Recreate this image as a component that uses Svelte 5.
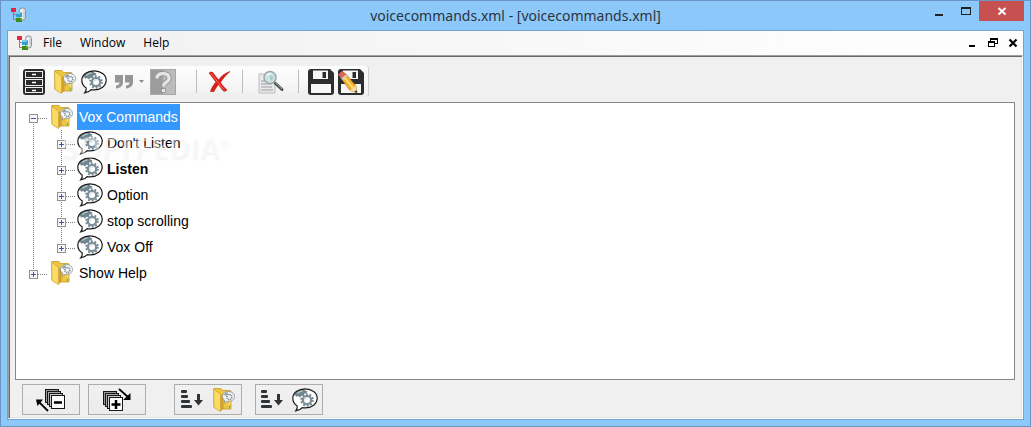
<script>
  let nodes = $state([
    {
      label: 'Vox Commands',
      open: true,
      children: [
        { label: "Don't Listen" },
        { label: 'Listen', bold: true },
        { label: 'Option' },
        { label: 'stop scrolling' },
        { label: 'Vox Off' }
      ]
    },
    { label: 'Show Help', open: false, children: [] }
  ]);
  let selected = $state('Vox Commands');

  function setAll(open) {
    for (const node of nodes) node.open = open && node.children.length > 0;
  }
</script>

{#snippet appIcon()}
  <svg width="16" height="16" viewBox="0 0 16 16" aria-hidden="true">
    <path d="M2.500 5v7.500h4M2.500 7.500h4" fill="none" stroke="#c8637a" />
    <rect x="8.500" y="1" width="6" height="12" rx="2.700" fill="#e4e7e8" stroke="#8b9396" />
    <path d="M10.500 3v8" stroke="#fff" stroke-width="1.500" />
    <path d="M13 4v7" stroke="#b9bfc1" />
    <rect x="0" y="1" width="5" height="4" fill="#e5243f" />
    <rect x="5" y="5" width="6" height="5" fill="#2f9fd4" />
    <path d="M5 5h6l-2 2H5z" fill="#7accec" />
    <rect x="5" y="11" width="6" height="4" fill="#3b8a1d" />
    <path d="M8 9.500l3.500 2.500-1.500 2z" fill="#5fb52f" />
  </svg>
{/snippet}

{#snippet bubble()}
  <svg width="26" height="24" viewBox="0 0 26 24" aria-hidden="true">
    <path
      d="M13 .8C6.200.8.800 4.900.800 10.300c0 3.300 1.700 6 4.400 7.700.3 1.900-.3 3.500-1.500 4.900 2.700-.3 5-1.300 6.500-3.200 1 .2 1.800.2 2.800.2 6.800 0 12.200-4.100 12.200-9.600S19.800.8 13 .8z"
      fill="#fff"
    />
    <path d="M2.500 5.500C5 2.500 8.500 1.200 12.500 1l.8 1.800 2 .5-.8 2-2 .3-.7 2-2.300.2-1.500 1.700-1.800-1.500-2.200.7-.5-1.500-1.500.3z" fill="#71858f" />
    <path d="M5.500 5.500c1.500-2 3.500-2.600 5-2.500" fill="none" stroke="#b5c3ca" stroke-width="1.400" />
    <circle cx="15" cy="12" r="5.900" fill="none" stroke="#778a94" stroke-width="1.800" stroke-dasharray="1.900 1.800" />
    <circle cx="15" cy="12" r="4.200" fill="#fff" stroke="#7d909a" stroke-width="2.300" />
    <path d="M12.800 12.500a2.300 2.300 0 0 1 3-2.500" fill="none" stroke="#c3ced3" stroke-width="1" />
    <path
      d="M13 .8C6.200.8.800 4.900.800 10.300c0 3.300 1.700 6 4.400 7.700.3 1.900-.3 3.500-1.500 4.900 2.700-.3 5-1.300 6.500-3.200 1 .2 1.800.2 2.800.2 6.800 0 12.200-4.100 12.200-9.600S19.800.8 13 .8z"
      fill="none"
      stroke="#1c1c1c"
      stroke-width="1.200"
    />
  </svg>
{/snippet}

{#snippet folder()}
  <svg width="24" height="26" viewBox="0 0 24 26" aria-hidden="true">
    <path d="M2 1.500h7l1.500 2H18a1 1 0 0 1 1 1V22H8L2 20z" fill="#edc542" stroke="#c79a2b" stroke-width=".8" />
    <path d="M17.500 5v16.500" stroke="#f7df83" stroke-width="1.500" />
    <path d="M1.500 2 7 6c1 .8 1.500 1.500 1.500 3v15.500L2 20.500z" fill="#f8dc64" stroke="#d0a236" stroke-width=".8" />
    <path d="M9 8v16l2.500-2.500V7z" fill="#d3a02c" />
    <path d="M16.500 4.500c-3.500 0-6 2.200-6 5 0 1.900 1 3.200 2.500 4.100l-1.200 2.600 3.600-1.900c4.200.4 7.100-1.700 7.100-4.800 0-2.900-2.500-5-6-5z" fill="#f3f5f6" stroke="#868c8e" stroke-width=".8" />
    <path d="M12 8c.6-1.700 2-2.600 4-2.800l-.8 2.600-2 1z" fill="#8e9ba2" />
    <circle cx="17.300" cy="10" r="2.500" fill="none" stroke="#81909a" stroke-width="1.600" stroke-dasharray="1.300 .6" />
    <path d="M17.500 18.500v3" stroke="#6eb843" stroke-width="1.500" />
  </svg>
{/snippet}

{#snippet sort()}
  <svg width="22" height="20" viewBox="0 0 22 20" aria-hidden="true">
    <g fill="#303436">
      <rect x="0" y="0" width="6" height="3" rx="1" />
      <rect x="0" y="5" width="7" height="3" rx="1" />
      <rect x="0" y="10" width="9" height="3" rx="1" />
      <rect x="0" y="15" width="11" height="3" rx="1" />
      <path d="M16 4h3v6h3l-4.500 5.500L13 10h3z" />
    </g>
  </svg>
{/snippet}

{#snippet expander(node, up, down)}
  <svg width="28" height="26" viewBox="0 0 28 26" shape-rendering="crispEdges" aria-hidden="true">
    <g stroke="#808080" stroke-dasharray="1 1">
      {#if up}<path d="M13.500 0v10" />{/if}
      {#if down}<path d="M13.500 18v8" />{/if}
      <path d="M18 14.500h10" />
    </g>
    <rect x="9.500" y="10.500" width="8" height="8" fill="#f7f7f7" stroke="#919191" />
    <path d="M11 14.500h5" stroke="#3f57a0" />
    {#if !node.open}<path d="M13.500 12v5" stroke="#3f57a0" />{/if}
  </svg>
{/snippet}

{#snippet pages()}
  <g fill="#999" stroke="#161616">
    <rect x=".5" y=".5" width="13" height="13" />
    <rect x="2.500" y="2.500" width="13" height="13" fill="#aaa" />
    <rect x="4.500" y="4.500" width="13" height="13" fill="#ccc" />
    <rect x="6.500" y="6.500" width="13" height="13" fill="#fff" />
  </g>
{/snippet}

<div class="window">
  <header class="titlebar">
    <span class="title-icon">{@render appIcon()}</span>
    <h1>voicecommands.xml - [voicecommands.xml]</h1>
    <div class="window-controls">
      <button type="button" aria-label="Minimize">
        <svg width="12" height="12" shape-rendering="crispEdges"><path d="M2 9h8v2H2z" fill="#222" /></svg>
      </button>
      <button type="button" aria-label="Maximize">
        <svg width="12" height="12" shape-rendering="crispEdges"><path d="M1 2h10v8H1zM2 4v5h8V4z" fill="#222" fill-rule="evenodd" /></svg>
      </button>
      <button type="button" class="close" aria-label="Close">
        <svg width="10" height="10"><path d="M1.500 2l7 6.500m0-6.500l-7 6.500" stroke="#fff" stroke-width="2" /></svg>
      </button>
    </div>
  </header>

  <div class="client">
    <div class="menubar">
      <span class="menu-icon">{@render appIcon()}</span>
      <nav>
        <button type="button">File</button>
        <button type="button">Window</button>
        <button type="button">Help</button>
      </nav>
      <div class="document-controls">
        <button type="button" aria-label="Minimize document">
          <svg width="10" height="10" shape-rendering="crispEdges"><path d="M1 7h6v2H1z" /></svg>
        </button>
        <button type="button" aria-label="Restore document">
          <svg width="10" height="10" shape-rendering="crispEdges">
            <path d="M2 0h8v6H7V5h2V2H3v1H2zM0 3h7v6H0zM1 5v3h5V5z" fill-rule="evenodd" />
          </svg>
        </button>
        <button type="button" aria-label="Close document">
          <svg width="10" height="10"><path d="M1.500 1.500l7 7m0-7l-7 7" stroke="#000" stroke-width="2.200" /></svg>
        </button>
      </div>
    </div>

    <main>
      <div class="toolbar" role="toolbar" aria-label="Commands">
        <button type="button" aria-label="Profile">
          <svg width="24" height="26" viewBox="0 0 24 26">
            <rect x="1" y="0" width="22" height="26" rx="3" fill="#292b2d" />
            <g fill="none" stroke="#eee" stroke-width="1">
              <rect x="3.500" y="2.500" width="17" height="6" />
              <rect x="3.500" y="10.500" width="17" height="6" />
              <rect x="3.500" y="18.500" width="17" height="5" />
            </g>
            <path d="M10 5.500h4M10 13.500h4M10 21.500h4" stroke="#fff" stroke-width="1.500" />
          </svg>
        </button>
        <button type="button" class="group" aria-label="New group">{@render folder()}</button>
        <button type="button" aria-label="New command">{@render bubble()}</button>
        <button type="button" aria-label="New phrase" disabled>
          <svg width="20" height="16" viewBox="0 0 20 16">
            <path d="M1 1h8v7c0 4-2.500 6-7 6.500v-3c2.500-.3 3.500-1.300 3.500-3H1zM11 1h8v7c0 4-2.500 6-7 6.500v-3c2.500-.3 3.500-1.300 3.500-3H11z" fill="#969696" />
          </svg>
        </button>
        <button type="button" class="drop" aria-label="Phrase types" disabled>
          <svg width="5" height="3" viewBox="0 0 5 3"><path d="M0 0h5L2.500 3z" fill="#8b8b8b" /></svg>
        </button>
        <button type="button" class="help" aria-label="Help" disabled>
          <svg width="26" height="26" viewBox="0 0 26 26">
            <rect x=".5" y=".5" width="12.500" height="25" fill="#9c9c9c" stroke="#aaa" />
            <rect x="13" y=".5" width="12.500" height="25" fill="#bcbcbc" stroke="#a6a6a6" />
            <g fill="none">
              <path d="M7 9.500C7 6 9.500 4.500 13 4.500s6.200 1.700 6.200 4.700c0 4-5.700 3.800-5.700 8.300" stroke="#8a8a8a" stroke-width="5" />
              <path d="M7 9.500C7 6 9.500 4.500 13 4.500s6.200 1.700 6.200 4.700c0 4-5.700 3.800-5.700 8.300" stroke="#e4e4e4" stroke-width="3.500" />
            </g>
            <rect x="11.500" y="19.500" width="4" height="4" fill="#e4e4e4" stroke="#858585" stroke-width=".7" />
          </svg>
        </button>
        <span class="separator before-delete"></span>
        <button type="button" aria-label="Delete">
          <svg width="24" height="24" viewBox="0 0 24 24">
            <path d="M2 3c2-1.500 3.500-1 4.500.5l5 6.500C14.500 6 18 3 23 1.500 19 5 16 8.500 13.500 12.500c2 3 4.500 5.500 6.500 7.500-1.500 1.500-3.500 1.500-4.500 0L11.500 14.500c-2 2.500-3.500 4.500-4.500 7H3.500C4.500 18 6.500 15 9 12 7 9.500 4.500 6 2 3z" fill="#df1d13" stroke="#b3120c" stroke-width=".6" />
            <path d="M4 3.500c3 2.500 5 7 8 10 1.500 2 3 4 5 6" fill="none" stroke="#ff7361" stroke-width="1" />
          </svg>
        </button>
        <span class="separator before-find"></span>
        <button type="button" class="find" aria-label="Find">
          <svg width="28" height="26" viewBox="0 0 28 26">
            <path d="M2 5h16v19H2z" fill="#e8e9e9" stroke="#bbb" />
            <path d="M4 12h5M4 15h11M4 18h11M4 21h12" stroke="#9b9e9f" />
            <path d="M18 14l7 6.500" stroke="#454a4d" stroke-width="3" stroke-linecap="round" />
            <path d="M18 13.500l7 6.500" stroke="#a8adaf" stroke-width="1" />
            <circle cx="13" cy="8.500" r="6" fill="#cbe2e2" stroke="#a0a6a8" stroke-width="1.500" />
            <path d="M9 7.500c1-3 4-4 6.500-2.500-3 0-4.500 1-6.500 2.500z" fill="#fff" />
            <path d="M13 6l3 2-1 4-2-2z" fill="#a6cbbd" />
          </svg>
        </button>
        <span class="separator before-save"></span>
        <button type="button" aria-label="Save">
          <svg width="26" height="26" viewBox="0 0 26 26">
            <path d="M3 0h19l4 4v19a3 3 0 0 1-3 3H3a3 3 0 0 1-3-3V3a3 3 0 0 1 3-3z" fill="#2b2d2e" />
            <path d="M5 1.500h15V10H5zM3 15h20v9H3z" fill="#f7f7f7" />
            <path d="M14.500 3h3.500v6h-3.500z" fill="#2b2d2e" />
          </svg>
        </button>
        <button type="button" aria-label="Save as">
          <svg width="28" height="26" viewBox="0 0 28 26">
            <path d="M4 0h19l4 4v19a3 3 0 0 1-3 3H4a3 3 0 0 1-3-3V3a3 3 0 0 1 3-3z" fill="#2b2d2e" />
            <path d="M6 1.500h15V10H6zM4 15h20v9H4z" fill="#f7f7f7" />
            <path d="M15.500 3H19v6h-3.500z" fill="#2b2d2e" />
            <path d="M3 8l5-4 11 13 1 7-7-2.500z" fill="#f4b52b" stroke="#a36a18" stroke-width=".6" />
            <path d="M6.500 7.500 16 19" stroke="#ffe083" stroke-width="1.800" />
            <path d="M1 5.500 5.500 1.800 9 5.500 4.500 9.500z" fill="#dc6257" />
            <path d="M4.500 9.500 9 5.500l1.200 1.400L5.700 11z" fill="#c9ced0" />
            <path d="M13 21.500l6-5 1 7.500z" fill="#f5dcaa" />
            <path d="M17.300 22.800l2.300-1.900.4 3.100z" fill="#333" />
          </svg>
        </button>
      </div>

      <div class="tree">
        <ul role="tree" aria-label="Voice commands">
          {#each nodes as node, i}
            <li role="treeitem" aria-expanded={node.open} aria-selected={selected === node.label}>
              <div class="row">
                <button type="button" class="toggle" aria-label="Toggle {node.label}" onclick={() => (node.open = !node.open)}>
                  {@render expander(node, i > 0, i < nodes.length - 1)}
                </button>
                <span class="node-icon">{@render folder()}</span>
                <button type="button" class="label" class:selected={selected === node.label} onclick={() => (selected = node.label)}>{node.label}</button>
              </div>
              {#if node.open}
                <ul role="group">
                  {#each node.children as child, j}
                    <li role="treeitem" aria-selected={selected === child.label}>
                      <div class="row">
                        <svg class="guide" width="28" height="26" shape-rendering="crispEdges" aria-hidden="true">
                          <path d="M13.500 0v26" stroke="#808080" stroke-dasharray="1 1" />
                        </svg>
                        <button type="button" class="toggle" aria-label="Toggle {child.label}">
                          {@render expander(child, true, j < node.children.length - 1)}
                        </button>
                        <span class="node-icon">{@render bubble()}</span>
                        <button type="button" class="label" class:bold={child.bold} class:selected={selected === child.label} onclick={() => (selected = child.label)}>{child.label}</button>
                      </div>
                    </li>
                  {/each}
                </ul>
              {/if}
            </li>
          {/each}
        </ul>
        <span class="watermark" aria-hidden="true">SOFTPEDIA<sup>®</sup></span>
      </div>

      <div class="actions">
        <button type="button" class="narrow" aria-label="Collapse all" onclick={() => setAll(false)}>
          <svg width="30" height="24" viewBox="0 0 30 24">
            <g transform="translate(9 1)">{@render pages()}</g>
            <path d="M18 14.500h8" stroke="#000" stroke-width="2.500" />
            <path d="M12 23 3 14" stroke="#000" stroke-width="1.800" />
            <path d="M0 11.500h7L1.500 18z" />
          </svg>
        </button>
        <button type="button" class="narrow" aria-label="Expand all" onclick={() => setAll(true)}>
          <svg width="30" height="24" viewBox="0 0 30 24">
            <g transform="translate(1 3)">{@render pages()}</g>
            <path d="M9.500 16.500h9M14 12v9" stroke="#000" stroke-width="2.500" />
            <path d="M17 1l9 8" stroke="#000" stroke-width="1.800" />
            <path d="M28.500 5v7H21z" />
          </svg>
        </button>
        <button type="button" class="wide sort-groups" aria-label="Sort groups">{@render sort()}{@render folder()}</button>
        <button type="button" class="wide sort-commands" aria-label="Sort commands">{@render sort()}{@render bubble()}</button>
      </div>
    </main>
  </div>
</div>

<style>
  :global(body) {
    margin: 0;
  }

  .window {
    box-sizing: border-box;
    min-height: 100vh;
    display: flex;
    flex-direction: column;
    padding: 0 6px 6px;
    border: 1px solid #6895c1;
    background: #8dc8fa;
    font-family: 'Liberation Sans', Arial, sans-serif;
  }

  button {
    display: flex;
    align-items: center;
    justify-content: center;
    margin: 0;
    padding: 0;
    border: 0;
    background: none;
    color: #000;
    font: inherit;
  }

  svg {
    display: block;
    flex: none;
  }

  ul {
    margin: 0;
    padding: 0;
    list-style: none;
  }

  .titlebar {
    display: grid;
    grid-template-columns: 98px 1fr 98px;
    height: 29px;
  }

  .title-icon {
    padding: 6px 0 0 4px;
  }

  h1 {
    margin: 0;
    color: #2b3440;
    font: 14px/29px 'Noto Sans', 'Open Sans', sans-serif;
    text-align: center;
    white-space: nowrap;
  }

  .window-controls {
    display: flex;
    justify-content: flex-end;
    height: 20px;
  }

  .window-controls button {
    width: 27px;
  }

  .window-controls .close {
    width: 45px;
    background: #c75050;
  }

  .client {
    flex: 1;
    display: flex;
    flex-direction: column;
    border: 1px solid #70a4d6;
    background: #fff;
  }

  .menubar {
    display: flex;
    align-items: center;
    height: 24px;
    background: linear-gradient(90deg, #f0f0f0, #fdfdfd 85%);
  }

  .menu-icon {
    padding-left: 9px;
  }

  nav {
    display: flex;
    gap: 18px;
    margin-left: 10px;
    font: 12px/24px 'Open Sans', 'Noto Sans', sans-serif;
  }

  .document-controls {
    display: flex;
    margin-left: auto;
  }

  .document-controls button {
    width: 20px;
    height: 24px;
  }

  main {
    flex: 1;
    display: flex;
    flex-direction: column;
    padding: 9px 7px 3px 6px;
    border: 1px solid;
    border-color: #a0a0a0 #fff #fff #a0a0a0;
    background: #f0f0f0;
    box-shadow: inset 1px 1px #696969, inset -1px -1px #e3e3e3;
  }

  .toolbar {
    display: flex;
    align-items: center;
    align-self: flex-start;
    height: 31px;
    margin: 1px 0 5px 4px;
    padding-right: 2px;
    border-right: 1px solid #d0d0d0;
    border-radius: 2px 3px 3px 2px;
    background: linear-gradient(#fdfdfd, #f8f8f8 50%, #eee);
  }

  .toolbar button {
    width: 30px;
    height: 30px;
  }

  .toolbar .group {
    padding-left: 2px;
    width: 30px;
    box-sizing: border-box;
  }

  .toolbar .drop {
    width: 5px;
  }

  .toolbar .help {
    margin-left: 4px;
  }

  .separator {
    width: 1px;
    height: 23px;
    background: #bdbdbd;
  }

  .before-delete {
    margin: 0 7px 0 18px;
  }

  .before-find {
    margin: 0 13px 0 8px;
  }

  .before-save {
    margin: 0 7px 0 12px;
  }

  .tree {
    position: relative;
    flex: 1;
    padding: 1px 4px;
    border: 1px solid #828790;
    background: #fff;
    font-size: 14px;
  }

  .row {
    display: flex;
    height: 26px;
  }

  .node-icon {
    display: grid;
    place-items: center;
    width: 28px;
  }

  .label {
    margin-left: 1px;
    padding: 0 2px;
    white-space: nowrap;
  }

  .label.bold {
    font-weight: bold;
  }

  .label.selected {
    background: #39f;
    color: #fff;
  }

  .watermark {
    position: absolute;
    top: 24px;
    left: 46px;
    color: rgb(255 255 255 / 45%);
    font: bold 29px/40px 'Open Sans', sans-serif;
    text-shadow: 1px 2px 2px rgb(0 0 0 / 5%);
    pointer-events: none;
  }

  .watermark sup {
    font-size: 13px;
    line-height: 1;
    vertical-align: 10px;
  }

  .actions {
    display: flex;
    padding: 4px 0 0 7px;
  }

  .actions button {
    box-sizing: border-box;
    height: 31px;
    border: 1px solid #adadad;
    background: linear-gradient(#f1f1f1, #ebebeb);
  }

  .actions .narrow {
    width: 58px;
    margin-right: 8px;
  }

  .actions .wide {
    gap: 9px;
    width: 68px;
  }

  .actions .sort-groups {
    margin: 0 13px 0 20px;
  }
</style>
